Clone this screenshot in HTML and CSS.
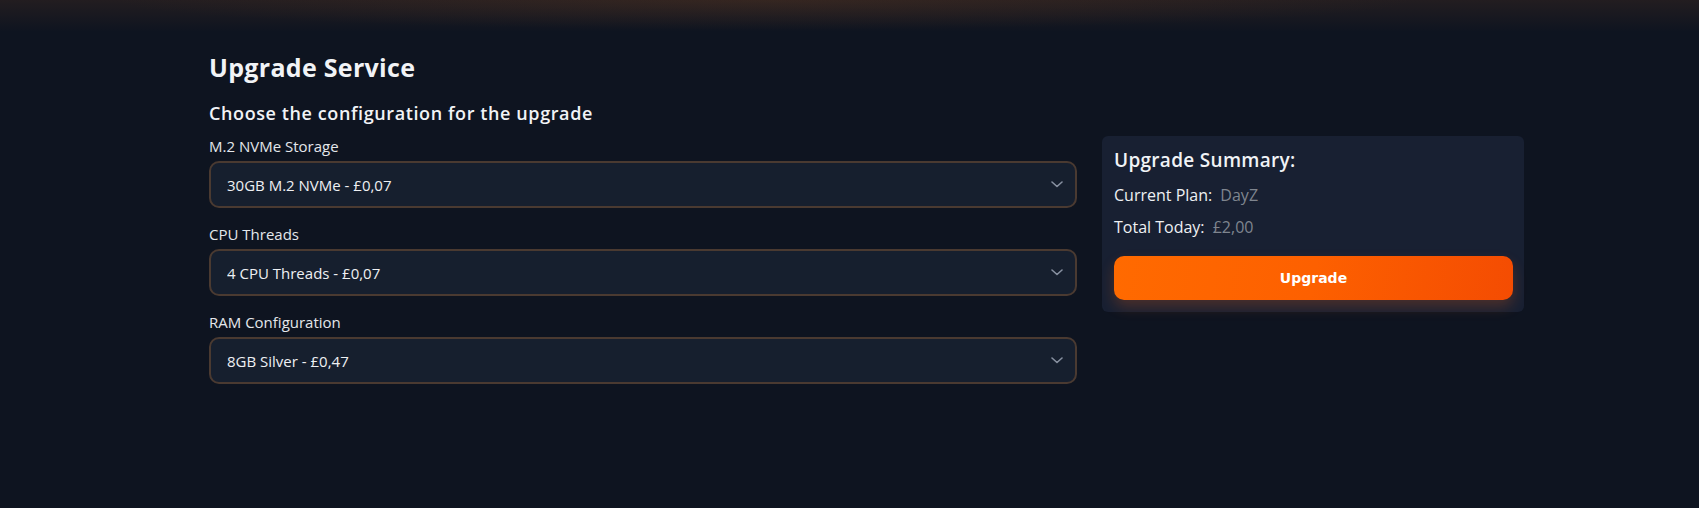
FILE: index.html
```html
<!DOCTYPE html>
<html lang="en">
<head>
  <meta charset="UTF-8" />
  <meta name="viewport" content="width=device-width, initial-scale=1.0"/>
  <title>Upgrade Service</title>
  <link rel="stylesheet" href="styles.css">
</head>
<body>
  <div class="container">
    <h1 class="page-title">Upgrade Service</h1>
    <h2 class="page-subtitle">Choose the configuration for the upgrade</h2>

    <div class="upgrade-grid">
      <div class="options">
        <div class="field">
          <label for="storage">M.2 NVMe Storage</label>
          <div class="select-wrap">
            <select id="storage">
              <option>30GB M.2 NVMe - £0,07</option>
              <option>60GB M.2 NVMe - £0,14</option>
            </select>
            <svg class="chevron" width="12" height="7" viewBox="0 0 12 7"><path d="M1 1l5 4.5L11 1" fill="none" stroke="#8790a0" stroke-width="1.6" stroke-linecap="round" stroke-linejoin="round"/></svg>
          </div>
        </div>

        <div class="field">
          <label for="cpu">CPU Threads</label>
          <div class="select-wrap">
            <select id="cpu">
              <option>4 CPU Threads - £0,07</option>
              <option>8 CPU Threads - £0,14</option>
            </select>
            <svg class="chevron" width="12" height="7" viewBox="0 0 12 7"><path d="M1 1l5 4.5L11 1" fill="none" stroke="#8790a0" stroke-width="1.6" stroke-linecap="round" stroke-linejoin="round"/></svg>
          </div>
        </div>

        <div class="field">
          <label for="ram">RAM Configuration</label>
          <div class="select-wrap">
            <select id="ram">
              <option>8GB Silver - £0,47</option>
              <option>16GB Gold - £0,94</option>
            </select>
            <svg class="chevron" width="12" height="7" viewBox="0 0 12 7"><path d="M1 1l5 4.5L11 1" fill="none" stroke="#8790a0" stroke-width="1.6" stroke-linecap="round" stroke-linejoin="round"/></svg>
          </div>
        </div>
      </div>

      <div class="summary">
        <h3>Upgrade Summary:</h3>
        <div class="summary-row">Current Plan: <span class="muted">DayZ</span></div>
        <div class="summary-row">Total Today: <span class="muted">£2,00</span></div>
        <button class="upgrade-btn">Upgrade</button>
      </div>
    </div>
  </div>
</body>
</html>
```

FILE: styles.css
```css
body {
  font-family: 'Open Sans', 'Liberation Sans', sans-serif;
  background:
    radial-gradient(ellipse 650px 30px at 45% 0, rgba(110, 65, 35, 0.25), transparent),
    linear-gradient(180deg, rgba(55, 38, 32, 0.5) 0, rgba(15, 20, 33, 0) 32px),
    #0e1420;
  color: #f1f3f6;
  margin: 0;
  min-height: 100vh;
}

.container {
  width: 1315px;
  margin-left: 209px;
  padding-top: 52px;
}

.page-title {
  font-size: 25px;
  line-height: 30px;
  font-weight: 700;
  letter-spacing: 0.3px;
  margin: 0 0 19px;
}

.page-subtitle {
  font-size: 18px;
  line-height: 24px;
  font-weight: 600;
  letter-spacing: 0.6px;
  margin: 0 0 11px;
}

.upgrade-grid {
  display: grid;
  grid-template-columns: 868px 422px;
  gap: 25px;
  align-items: start;
}

.field {
  margin-bottom: 16px;
}

.field label {
  display: block;
  font-size: 15px;
  line-height: 20px;
  color: #e4e7eb;
  margin-bottom: 5px;
}

.select-wrap {
  position: relative;
}

select {
  appearance: none;
  -webkit-appearance: none;
  width: 100%;
  height: 47px;
  padding: 0 40px 0 16px;
  border: 2px solid #4a3a31;
  border-radius: 10px;
  background: #161f2e;
  color: #eef0f3;
  font-family: inherit;
  font-size: 15px;
  outline: none;
}

.chevron {
  position: absolute;
  right: 14px;
  top: 20px;
  pointer-events: none;
}

.summary {
  background: #182032;
  border-radius: 6px;
  padding: 12px 11px 12px 12px;
}

.summary h3 {
  font-size: 19px;
  line-height: 24px;
  font-weight: 600;
  letter-spacing: 0.3px;
  margin: 0 0 11px;
}

.summary-row {
  font-size: 16px;
  line-height: 24px;
  margin-bottom: 8px;
  color: #eef0f3;
}

.summary-row .muted {
  color: #7f858f;
  margin-left: 4px;
}

.upgrade-btn {
  display: block;
  width: 100%;
  height: 44px;
  margin-top: 17px;
  border: none;
  border-radius: 10px;
  background: linear-gradient(100deg, #ff6a00 0%, #fd6000 50%, #f44c02 100%);
  color: #fff;
  font-family: 'DejaVu Sans', sans-serif;
  font-size: 14px;
  font-weight: 700;
  cursor: pointer;
  box-shadow: 0 7px 14px rgba(255, 100, 20, 0.22);
}
```
